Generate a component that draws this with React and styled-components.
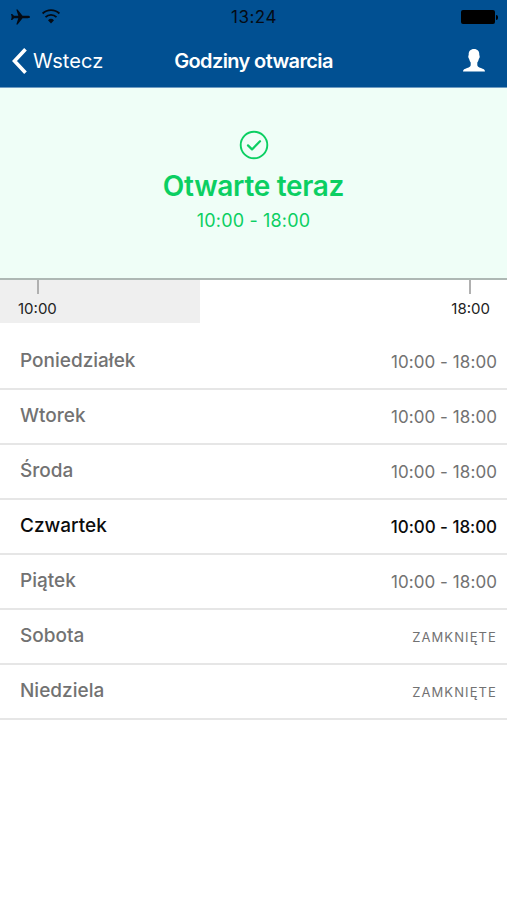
import styled, { createGlobalStyle } from "styled-components";

const days = [
    { name: "Poniedziałek", hours: "10:00 - 18:00" },
    { name: "Wtorek", hours: "10:00 - 18:00" },
    { name: "Środa", hours: "10:00 - 18:00" },
    { name: "Czwartek", hours: "10:00 - 18:00", today: true },
    { name: "Piątek", hours: "10:00 - 18:00" },
    { name: "Sobota" },
    { name: "Niedziela" },
];

const App = () => {
    return(
    <Screen>
        <GlobalStyle />
        <Header>
            <StatusBar>
                <StatusIcons>
                    <svg width="20" height="16" viewBox="0 0 20 16">
                        <path fill="#050b14" d="M20 8c0-.8-1-1.200-2.200-1.200h-5.300L7.600.4H6.300l2 6.400H4L2.200 5H1l.7 3-.7 3h1.200L4 9.200h4.300l-2 6.400h1.300l4.900-6.400h5.300C19 9.200 20 8.800 20 8z" />
                    </svg>
                    <svg width="20" height="16" viewBox="0 0 20 16">
                        <g fill="none" stroke="#050b14" strokeWidth="1.800">
                            <path d="M1.600 4.500a12 12 0 0 1 16.800 0" />
                            <path d="M4.500 8.100a7.800 7.800 0 0 1 11 0" />
                        </g>
                        <path fill="#050b14" d="M10 14.500l-3-3.300a4.400 4.400 0 0 1 6 0z" />
                    </svg>
                </StatusIcons>
                <Clock>13:24</Clock>
                <Battery>
                    <BatteryBody />
                    <BatteryTip />
                </Battery>
            </StatusBar>
            <NavBar>
                <Back>
                    <svg width="16" height="28" viewBox="0 0 16 28">
                        <path fill="none" stroke="#fff" strokeWidth="3.600" d="M14.500 2.200L3.500 14l11 11.800" />
                    </svg>
                    <BackLabel>Wstecz</BackLabel>
                </Back>
                <Title>Godziny otwarcia</Title>
                <Profile>
                    <svg width="22" height="23" viewBox="0 0 22 23">
                        <path fill="#fff" d="M11 0C7.500 0 5.600 2.300 5.700 5.500c0 1-.500 1.200-.400 2.400.1 1.100.7 1.500 1 2.500.3 1.400.8 2.400 1.400 3.100v2.600c0 1.600-1.300 2.200-3.600 3C1.700 20 0 20.500 0 22.600h22c0-2.100-1.700-2.600-4.100-3.500-2.300-.8-3.600-1.400-3.600-3v-2.600c.6-.7 1.100-1.700 1.400-3.100.3-1 .9-1.400 1-2.500.1-1.200-.4-1.400-.4-2.400C16.400 2.300 14.500 0 11 0z" />
                    </svg>
                </Profile>
            </NavBar>
        </Header>
        <Banner>
            <svg width="30" height="30" viewBox="0 0 30 30">
                <g fill="none" stroke="#0bcf62" strokeWidth="1.900">
                    <circle cx="15" cy="15" r="13.300" />
                    <path strokeWidth="2.200" strokeLinecap="round" strokeLinejoin="round" d="M9 15.400l4 4 8-8.200" />
                </g>
            </svg>
            <State>Otwarte teraz</State>
            <StateHours>10:00 - 18:00</StateHours>
        </Banner>
        <Timeline>
            <Elapsed />
            <Mark>10:00</Mark>
            <Mark>18:00</Mark>
        </Timeline>
        <Week>
            {days.map((day) => (
                <Row key={day.name} $today={day.today}>
                    <Day>{day.name}</Day>
                    {day.hours ? <Hours $today={day.today}>{day.hours}</Hours> : <Closed>Zamknięte</Closed>}
                </Row>
            ))}
        </Week>
    </Screen>
    );
};

const GlobalStyle = createGlobalStyle`
body {
    margin: 0;
    background: #fff;
}
`;

const Screen = styled.main`
box-sizing: border-box;
width: 100%;
min-height: 900px;
background: #fff;
font-family: Inter, "Liberation Sans", sans-serif;
white-space: nowrap;
`;

const Header = styled.header`
box-sizing: border-box;
height: 88px;
background: #015092;
border-bottom: 1px solid #6f9cc2;
`;

const StatusBar = styled.div`
display: grid;
grid-template-columns: 1fr auto 1fr;
align-items: center;
height: 34px;
padding: 0 9px 0 10px;
color: #050b14;
`;

const StatusIcons = styled.div`
display: flex;
gap: 11px;
`;

const Clock = styled.span`
font-size: 17px;
letter-spacing: 0.5px;
line-height: 34px;
`;

const Battery = styled.div`
display: flex;
align-items: center;
justify-content: flex-end;
gap: 1px;
`;

const BatteryBody = styled.div`
width: 34px;
height: 14px;
border-radius: 2px;
background: #000;
`;

const BatteryTip = styled.div`
width: 2px;
height: 5px;
border-radius: 0 2px 2px 0;
background: #000;
`;

const NavBar = styled.nav`
display: grid;
grid-template-columns: 1fr auto 1fr;
align-items: center;
height: 53px;
color: #fff;
`;

const Back = styled.div`
display: flex;
align-items: center;
gap: 6px;
padding-left: 11px;
`;

const BackLabel = styled.span`
font-size: 20px;
letter-spacing: 0.1px;
line-height: 28px;
`;

const Title = styled.h1`
margin: 0;
font-size: 20px;
font-weight: 600;
letter-spacing: -0.62px;
`;

const Profile = styled.div`
display: flex;
justify-content: flex-end;
padding-right: 22px;
`;

const Banner = styled.section`
box-sizing: border-box;
display: flex;
flex-direction: column;
align-items: center;
height: 192px;
padding-top: 42px;
background: #effef7;
border-bottom: 2px solid #aeb8b4;
color: #0bcf62;
`;

const State = styled.h2`
margin: 9px 0 0;
font-size: 28px;
font-weight: 600;
letter-spacing: -0.3px;
line-height: 34px;
`;

const StateHours = styled.p`
margin: 6px 0 0;
font-size: 18px;
letter-spacing: 0.15px;
line-height: 24px;
`;

const Timeline = styled.section`
display: flex;
justify-content: space-between;
position: relative;
height: 43px;
padding: 0 17px 0 18px;
`;

const Elapsed = styled.div`
position: absolute;
top: 0;
left: 0;
width: 200px;
height: 43px;
background: #efefef;
`;

const Mark = styled.div`
display: flex;
flex-direction: column;
align-items: center;
position: relative;
color: #222;
font-size: 15px;
line-height: 20px;
&::before {
    content: "";
    width: 2px;
    height: 14px;
    margin: 0 0 5px 1px;
    background: #b0b0b0;
}
&:last-child::before {
    margin: 0 2px 5px 0;
}
`;

const Week = styled.section`
padding-top: 12px;
`;

const Row = styled.div`
box-sizing: border-box;
display: flex;
justify-content: space-between;
align-items: center;
height: 55px;
padding: 0 10px 0 20px;
border-bottom: 2px solid #e6e6e6;
color: ${(props) => (props.$today ? "#0c0c0c" : "#727272")};
`;

const Day = styled.span`
padding-bottom: 2px;
font-size: 19px;
font-weight: 500;
`;

const Hours = styled.span`
font-size: 17px;
font-weight: ${(props) => (props.$today ? 500 : 400)};
letter-spacing: ${(props) => (props.$today ? "-0.05px" : "0.07px")};
`;

const Closed = styled.span`
padding-top: 1px;
font-size: 13px;
letter-spacing: 1.1px;
text-transform: uppercase;
`;

export default App;
